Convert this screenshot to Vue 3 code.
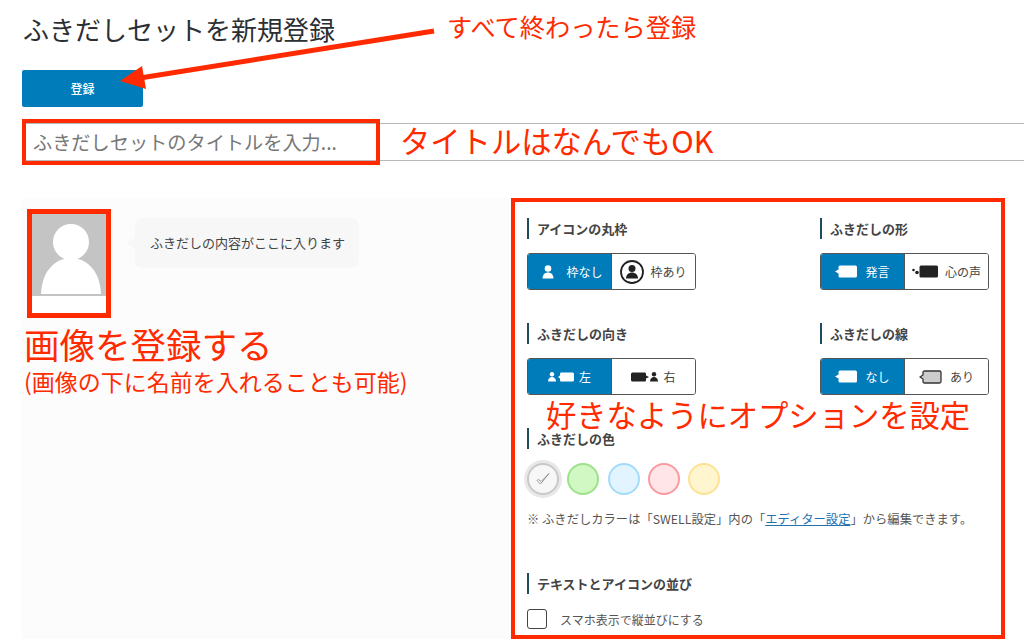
<script setup>
const swatches = [
  { bg: '#f7f7f7', bd: '#c9c9c9', on: true },
  { bg: '#d1f8c2', bd: '#9be28a' },
  { bg: '#e1f4ff', bd: '#a3dcfa' },
  { bg: '#ffe5e8', bd: '#f99aa3' },
  { bg: '#fff6cf', bd: '#fde293' },
]
</script>

<template>
  <div class="page">
    <h1 class="title">ふきだしセットを新規登録</h1>
    <button class="save" type="button">登録</button>
    <div class="title-field">
      <input class="title-input" type="text" placeholder="ふきだしセットのタイトルを入力..." />
      <div class="mark-title"></div>
    </div>

    <main class="main">
      <section class="preview">
        <div class="avatar">
          <svg class="avatar-img" width="74" height="80" viewBox="0 0 74 80">
            <rect width="74" height="80" fill="#c4c4c4" />
            <circle cx="39" cy="28" r="18" fill="#fff" />
            <path d="M9 80C10 55 25 44 39 44C53 44 68 55 69 80Z" fill="#fff" />
          </svg>
          <div class="avatar-name"></div>
        </div>
        <div class="bubble">ふきだしの内容がここに入ります</div>
      </section>

      <section class="panel">
        <div class="grid">
          <div class="opt">
            <h2 class="label">アイコンの丸枠</h2>
            <div class="group">
              <div class="seg on">
                <svg class="person-a" width="12" height="14" viewBox="0 0 12 14"><circle cx="6" cy="3.5" r="3.3" fill="#fff" /><path d="M0.5 13.5C0.5 9.5 3 7.5 6 7.5C9 7.5 11.500 9.500 11.500 13.500Z" fill="#fff" /></svg>
                <span class="t-a">枠なし</span>
              </div>
              <div class="seg">
                <svg width="24" height="24" viewBox="0 0 24 24"><circle cx="12" cy="12" r="11" fill="#fff" stroke="#222" stroke-width="1.800" /><circle cx="12" cy="8.500" r="3.500" fill="#222" /><path d="M6 18.500C6 14.500 9 12.500 12 12.500C15 12.500 18 14.500 18 18.500Z" fill="#222" /></svg>
                <span class="t-b">枠あり</span>
              </div>
            </div>
          </div>

          <div class="opt">
            <h2 class="label">ふきだしの形</h2>
            <div class="group">
              <div class="seg on">
                <svg width="22" height="13" viewBox="0 0 22 13"><path d="M5 0.500H20.500Q22 0.500 22 2V11Q22 12.500 20.500 12.500H5Q3.500 12.500 3.500 11V8.500L0 6.500L3.500 4.500V2Q3.500 0.500 5 0.500Z" fill="#fff" /></svg>
                <span class="t-c">発言</span>
              </div>
              <div class="seg">
                <svg width="26" height="13" viewBox="0 0 26 13"><circle cx="1.500" cy="5" r="1.300" fill="#222" /><circle cx="5" cy="7.500" r="1.800" fill="#222" /><rect x="7.500" y="0.500" width="18.500" height="12" rx="1.500" fill="#222" /></svg>
                <span class="t-d">心の声</span>
              </div>
            </div>
          </div>

          <div class="opt">
            <h2 class="label">ふきだしの向き</h2>
            <div class="group">
              <div class="seg on">
                <svg width="26" height="10" viewBox="0 0 26 10"><circle cx="4" cy="2.300" r="2.200" fill="#fff" /><path d="M0 9.500C0 6.500 2 5 4 5C6 5 8 6.500 8 9.500Z" fill="#fff" /><path d="M13 0.500H24.500Q26 0.500 26 2V8Q26 9.500 24.500 9.500H13Q12 9.500 12 8V6.500L10 5L12 3.500V2Q12 0.500 13 0.500Z" fill="#fff" /></svg>
                <span class="t-e">左</span>
              </div>
              <div class="seg">
                <svg width="27" height="10" viewBox="0 0 27 10"><path d="M1.500 0.500H14Q15 0.500 15 2V3.500L18 5L15 6.500V8Q15 9.500 14 9.500H1.500Q0 9.500 0 8V2Q0 0.500 1.500 0.500Z" fill="#222" /><circle cx="23" cy="2.300" r="2.200" fill="#222" /><path d="M19 9.500C19 6.500 21 5 23 5C25 5 27 6.500 27 9.500Z" fill="#222" /></svg>
                <span class="t-e">右</span>
              </div>
            </div>
          </div>

          <div class="opt">
            <h2 class="label">ふきだしの線</h2>
            <div class="group">
              <div class="seg on">
                <svg width="22" height="13" viewBox="0 0 22 13"><path d="M5 0.500H20.500Q22 0.500 22 2V11Q22 12.500 20.500 12.500H5Q3.500 12.500 3.500 11V8.500L0 6.500L3.500 4.500V2Q3.500 0.500 5 0.500Z" fill="#fff" /></svg>
                <span class="t-c">なし</span>
              </div>
              <div class="seg">
                <svg width="23" height="14" viewBox="0 0 23 14"><path d="M5.500 1H20.500Q22 1 22 2.500V11.500Q22 13 20.500 13H5.500Q4 13 4 11.500V9L1 7L4 5V2.500Q4 1 5.500 1Z" fill="#ccc" stroke="#333" stroke-width="1.300" /></svg>
                <span class="t-f">あり</span>
              </div>
            </div>
          </div>
        </div>

        <h2 class="label color-label">ふきだしの色</h2>
        <div class="swatches">
          <span
            v-for="s in swatches"
            :key="s.bd"
            class="swatch"
            :class="{ picked: s.on }"
            :style="{ background: s.bg, borderColor: s.bd }"
          >
            <svg v-if="s.on" width="16" height="16" viewBox="0 0 16 16"><path d="M2 9.500L5.500 13L14 2.500L6 10.500L3.500 8.500Z" fill="#fff" stroke="#888" stroke-width="0.900" stroke-linejoin="round" /></svg>
          </span>
        </div>
        <p class="note">※ ふきだしカラーは「SWELL設定」内の「<a class="link" href="#">エディター設定</a>」から編集できます。</p>

        <h2 class="label order-label">テキストとアイコンの並び</h2>
        <label class="check"><span class="box"></span><span>スマホ表示で縦並びにする</span></label>
      </section>
    </main>

    <!-- Red hand-drawn annotations placed over the screenshot -->
    <svg class="arrow" width="1024" height="641" viewBox="0 0 1024 641">
      <path d="M434 31L140 78" stroke="#ff2a00" stroke-width="5" fill="none" />
      <path d="M120 81L142 66L146 89Z" fill="#ff2a00" />
    </svg>
    <span class="note-red n1">すべて終わったら登録</span>
    <span class="note-red n2">タイトルはなんでもOK</span>
    <span class="note-red n3">画像を登録する</span>
    <span class="note-red n4">(画像の下に名前を入れることも可能)</span>
    <span class="note-red n5">好きなようにオプションを設定</span>
  </div>
</template>

<style>
html, body { margin: 0; background: #fff; overflow: hidden; }
</style>

<style scoped>
.page {
  position: relative;
  width: 1024px;
  height: 641px;
  overflow: hidden;
  background: #fff;
  font-family: "Noto Sans CJK JP", "Noto Sans", sans-serif;
  color: #444;
}
.title {
  margin: 0;
  padding: 11px 0 0 23px;
  height: 70px;
  box-sizing: border-box;
  font-size: 26px;
  line-height: 36px;
  font-weight: 400;
  color: #2b2f33;
}
.save {
  display: block;
  width: 121px;
  height: 37px;
  margin: 0 0 0 22px;
  padding: 0;
  border: 0;
  border-radius: 2px;
  background: #007cba;
  color: #fff;
  font: 500 12px "Noto Sans CJK JP", sans-serif;
}
.title-field {
  position: relative;
  margin: 16px 0 0 22px;
  height: 38px;
  box-sizing: border-box;
  border-top: 1px solid #b9b9bd;
  border-bottom: 1px solid #b9b9bd;
}
.title-input {
  display: block;
  width: 100%;
  height: 36px;
  box-sizing: border-box;
  padding: 0 0 0 11px;
  border: 0;
  outline: 0;
  background: transparent;
  font: 400 19.2px "Noto Sans CJK JP", sans-serif;
}
.title-input::placeholder { color: #777; opacity: 1; }
.mark-title {
  position: absolute;
  left: 0;
  top: -5px;
  width: 358px;
  height: 46px;
  box-sizing: border-box;
  border: 4px solid #ff2a00;
}
.main {
  display: flex;
  margin: 37px 0 0 22px;
  height: 441px;
}
.preview {
  display: flex;
  align-items: flex-start;
  width: 489px;
  padding: 11px 0 0 5px;
  box-sizing: border-box;
  background: #fcfcfc;
}
.avatar {
  width: 84px;
  height: 109px;
  box-sizing: border-box;
  border: 5px solid #ff2a00;
  background: #fff;
}
.avatar-img { display: block; }
.avatar-name { height: 2px; background: #c4c4c4; }
.bubble {
  position: relative;
  margin: 9px 0 0 24px;
  width: 224px;
  height: 50px;
  box-sizing: border-box;
  padding-left: 15px;
  border-radius: 7px;
  background: #f7f7f7;
  font-size: 13px;
  line-height: 50px;
  color: #444;
  white-space: nowrap;
}
.bubble::before {
  content: "";
  position: absolute;
  left: -9px;
  top: 20px;
  border: 5px solid transparent;
  border-left-width: 0;
  border-right: 9px solid #f7f7f7;
}
.panel {
  width: 494px;
  height: 441px;
  box-sizing: border-box;
  border: 4px solid #ff2a00;
  padding: 16px 0 0 12px;
  background: #fff;
}
.grid {
  display: grid;
  grid-template-columns: 293px 170px;
  row-gap: 33px;
}
.label {
  margin: 0;
  height: 21px;
  box-sizing: border-box;
  padding-left: 8px;
  border-left: 2px solid #1d4b5f;
  font-size: 13px;
  line-height: 21px;
  font-weight: 700;
  color: #444;
  white-space: nowrap;
}
.group {
  display: flex;
  width: 169px;
  height: 37px;
  margin-top: 14px;
  box-sizing: border-box;
  border: 1px solid #555;
  border-radius: 3px;
  overflow: hidden;
}
.seg {
  flex: 1 1 50%;
  display: flex;
  align-items: center;
  justify-content: center;
  font-size: 12px;
  color: #444;
  background: #fff;
  white-space: nowrap;
}
.seg.on {
  background: #007cba;
  color: #fff;
  border-right: 1px solid #555;
}
.person-a { margin-left: 6px; }
.t-a { margin-left: 12px; }
.t-b { margin-left: 6px; }
.t-c { margin-left: 8px; }
.t-d { margin-left: 7px; }
.t-e { margin-left: 5px; }
.t-f { margin-left: 8px; }
.color-label { margin-top: 33px; }
.swatches {
  display: flex;
  gap: 8.250px;
  margin-top: 14px;
}
.swatch {
  display: flex;
  align-items: center;
  justify-content: center;
  width: 32px;
  height: 32px;
  box-sizing: border-box;
  border: 2px solid;
  border-radius: 50%;
}
.swatch.picked { box-shadow: 0 0 0 3px #e8e8e8; }
.note {
  margin: 15px 0 0;
  font-size: 12.3px;
  line-height: 18px;
  color: #555;
  white-space: nowrap;
}
.link { color: #2271b1; text-decoration: underline; }
.order-label { margin-top: 45px; }
.check {
  display: flex;
  align-items: center;
  gap: 13px;
  margin-top: 15px;
  font-size: 12px;
  color: #555;
}
.box {
  width: 20px;
  height: 20px;
  box-sizing: border-box;
  border: 1px solid #444;
  border-radius: 3px;
  background: #fff;
}
.arrow { position: absolute; left: 0; top: 0; pointer-events: none; }
.note-red {
  position: absolute;
  color: #ff2a00;
  line-height: 1;
  white-space: nowrap;
}
.n1 { left: 447px; top: 14px; font-size: 25.2px; }
.n2 { left: 400px; top: 125px; font-size: 30.3px; }
.n3 { left: 24px; top: 326px; font-size: 35.5px; }
.n4 { left: 24px; top: 370px; font-size: 23px; }
.n5 { left: 546px; top: 400px; font-size: 30.3px; line-height: 28px; }
</style>
